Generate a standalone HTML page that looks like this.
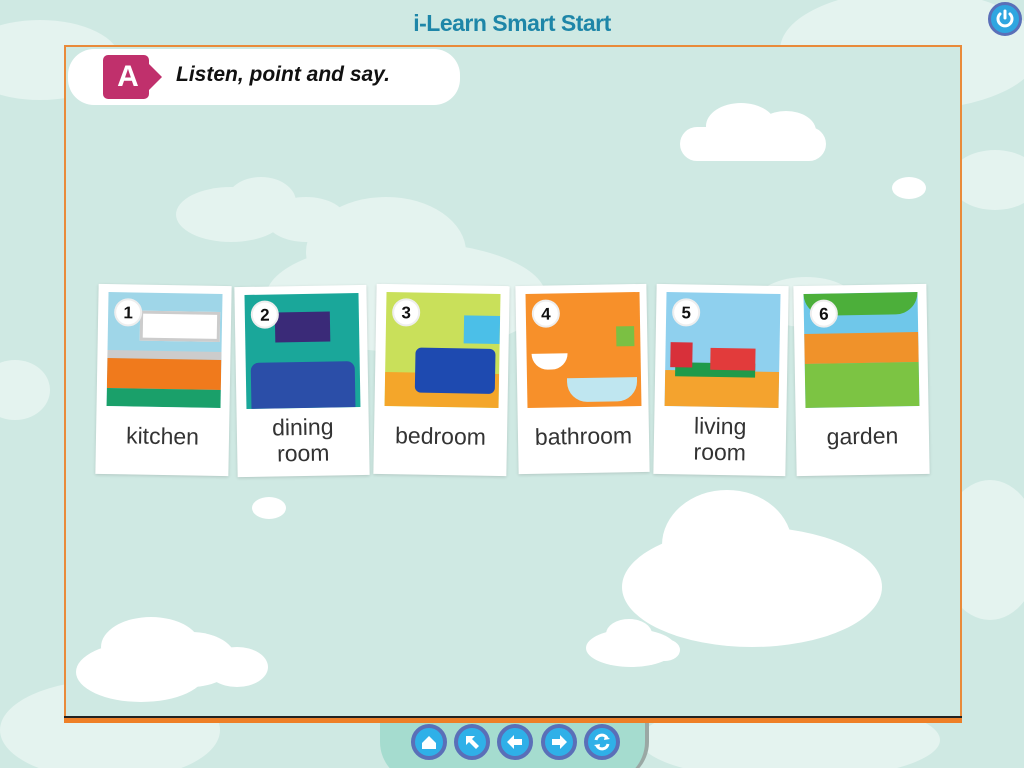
<!DOCTYPE html>
<html><head><meta charset="utf-8"><style>
*{margin:0;padding:0;box-sizing:border-box}
html,body{width:1024px;height:768px;overflow:hidden}
body{background:#cfe9e3;position:relative;font-family:"Liberation Sans",sans-serif}
.c{position:absolute;background:#e4f3ef;border-radius:50%}
.w{position:absolute;background:#fff;border-radius:50%}
#title{position:absolute;left:0;width:1024px;top:10px;text-align:center;color:#1e86a8;font:bold 23px "Liberation Sans Narrow","Liberation Sans",sans-serif;letter-spacing:-0.5px}
#frame{position:absolute;left:64px;top:45px;width:898px;height:678px;border:2px solid #e98a3a;border-bottom:none;overflow:hidden;background:#cfe9e3}
#bl{position:absolute;left:64px;top:716px;width:898px;height:2px;background:#222}
#bo{position:absolute;left:64px;top:718px;width:898px;height:5px;background:#ee7f27}
.card{position:absolute;background:#fff;box-shadow:0 1px 3px rgba(0,0,0,.15)}
.img{position:absolute;left:10px;top:8px;width:114px;height:114px;overflow:hidden}
.num{position:absolute;left:6px;top:6px;width:28px;height:28px;border-radius:50%;background:#fff;border:2px solid #eee;font:bold 17px "Liberation Sans",sans-serif;text-align:center;line-height:25px;color:#111;z-index:2}
.lbl{position:absolute;left:0;width:100%;text-align:center;font-size:23px;color:#333;line-height:26px}
.btn{position:absolute;top:724px;width:36px;height:36px;border-radius:50%;background:#2fb0e8;border:4px solid #5a6fb8}
.hA{position:absolute;left:37px;top:8px;width:50px;text-align:center;color:#fff;font-weight:bold;font-size:30px;line-height:44px;font-family:"Liberation Sans Narrow","Liberation Sans",sans-serif}
.hT{position:absolute;left:110px;top:16px;font-style:italic;font-weight:bold;font-size:21px;color:#111}
</style></head><body>
<div class="c" style="left:-40px;top:20px;width:160px;height:80px"></div>
<div class="c" style="left:780px;top:-10px;width:260px;height:120px"></div>
<div class="c" style="left:950px;top:150px;width:90px;height:60px"></div>
<div class="c" style="left:940px;top:480px;width:100px;height:140px"></div>
<div class="c" style="left:-20px;top:360px;width:70px;height:60px"></div>
<div class="c" style="left:0;top:680px;width:220px;height:100px"></div>
<div class="c" style="left:640px;top:700px;width:300px;height:80px"></div>
<div id="title">i-Learn Smart Start</div>
<div style="position:absolute;left:988px;top:2px;width:34px;height:34px;border-radius:50%;background:#2fa6e0;border:3px solid #5a6fb8">
<svg width="28" height="28" viewBox="0 0 28 28"><path d="M9 9 A7 7 0 1 0 19 9" stroke="#fff" stroke-width="3" fill="none" stroke-linecap="round"/><path d="M14 6 V13" stroke="#fff" stroke-width="3" stroke-linecap="round"/></svg></div>
<div style="position:absolute;left:380px;top:722px;width:265px;height:60px;background:#a5dccf;border-radius:0 0 40px 40px;box-shadow:4px 0 0 #9aa8a4"></div>
<div id="frame">
<div class="c" style="left:110px;top:140px;width:110px;height:55px"></div>
<div class="c" style="left:160px;top:130px;width:70px;height:50px"></div>
<div class="c" style="left:200px;top:150px;width:80px;height:45px"></div>
<div class="c" style="left:200px;top:195px;width:280px;height:110px"></div>
<div class="c" style="left:240px;top:150px;width:160px;height:110px"></div>
<div class="c" style="left:690px;top:230px;width:100px;height:50px"></div>
<div class="w" style="left:614px;top:80px;width:146px;height:34px;border-radius:17px"></div>
<div class="w" style="left:640px;top:56px;width:70px;height:46px"></div>
<div class="w" style="left:690px;top:64px;width:60px;height:40px"></div>
<div class="w" style="left:826px;top:130px;width:34px;height:22px"></div>
<div class="w" style="left:186px;top:450px;width:34px;height:22px"></div>
<div class="w" style="left:596px;top:443px;width:130px;height:110px"></div>
<div class="w" style="left:556px;top:480px;width:260px;height:120px"></div>
<div class="w" style="left:10px;top:595px;width:130px;height:60px"></div>
<div class="w" style="left:35px;top:570px;width:100px;height:60px"></div>
<div class="w" style="left:80px;top:585px;width:90px;height:55px"></div>
<div class="w" style="left:140px;top:600px;width:62px;height:40px"></div>
<div class="w" style="left:520px;top:582px;width:90px;height:38px"></div>
<div class="w" style="left:540px;top:572px;width:46px;height:30px"></div>
<div class="w" style="left:584px;top:592px;width:30px;height:22px"></div>
<div style="position:absolute;left:2px;top:2px;width:392px;height:56px;background:#fff;border-radius:26px"></div>
<div style="position:absolute;left:37px;top:8px;width:46px;height:44px;background:#c0306c;border-radius:5px"></div>
<div style="position:absolute;left:76px;top:10px;width:0;height:0;border-top:20px solid transparent;border-bottom:20px solid transparent;border-left:20px solid #c0306c"></div>
<div class="hA">A</div>
<div class="hT">Listen, point and say.</div>
</div>
<div id="bl"></div><div id="bo"></div>

<div class="card" style="left:97px;top:285px;width:133px;height:190px;transform:rotate(1deg)">
<div class="img" style="background:#9fd6e8"><div class="num">1</div>
<div style="position:absolute;left:32px;top:18px;width:80px;height:30px;background:#fff;border:3px solid #ccc"></div>
<div style="position:absolute;left:0;top:58px;width:114px;height:8px;background:#ccc"></div>
<div style="position:absolute;left:0;top:66px;width:114px;height:30px;background:#f07a1c"></div>
<div style="position:absolute;left:0;top:96px;width:114px;height:18px;background:#1aa06a"></div></div>
<div class="lbl" style="top:138px">kitchen</div></div>

<div class="card" style="left:236px;top:286px;width:132px;height:190px;transform:rotate(-1deg)">
<div class="img" style="background:#1aa79a"><div class="num">2</div>
<div style="position:absolute;left:30px;top:18px;width:55px;height:30px;background:#3a2a78"></div>
<div style="position:absolute;left:5px;top:68px;width:104px;height:46px;background:#2b4ea8;border-radius:8px 8px 0 0"></div></div>
<div class="lbl" style="top:128px">dining<br>room</div></div>

<div class="card" style="left:375px;top:285px;width:133px;height:190px;transform:rotate(1deg)">
<div class="img" style="background:#c9e05a"><div class="num">3</div>
<div style="position:absolute;left:0;top:80px;width:114px;height:34px;background:#f4a62a"></div>
<div style="position:absolute;left:30px;top:55px;width:80px;height:45px;background:#1e4ab0;border-radius:6px"></div>
<div style="position:absolute;left:78px;top:22px;width:36px;height:28px;background:#4bbfe8"></div></div>
<div class="lbl" style="top:138px">bedroom</div></div>

<div class="card" style="left:517px;top:285px;width:131px;height:188px;transform:rotate(-1deg)">
<div class="img" style="background:#f7902a"><div class="num">4</div>
<div style="position:absolute;left:40px;top:85px;width:70px;height:24px;background:#bfe6f0;border-radius:0 0 20px 20px"></div>
<div style="position:absolute;left:5px;top:60px;width:36px;height:16px;background:#fff;border-radius:0 0 18px 18px"></div>
<div style="position:absolute;left:90px;top:34px;width:18px;height:20px;background:#7bc043"></div></div>
<div class="lbl" style="top:138px">bathroom</div></div>

<div class="card" style="left:655px;top:285px;width:132px;height:190px;transform:rotate(1deg)">
<div class="img" style="background:#8fd0ee"><div class="num">5</div>
<div style="position:absolute;left:0;top:78px;width:114px;height:36px;background:#f4a32e"></div>
<div style="position:absolute;left:10px;top:70px;width:80px;height:14px;background:#1f9a4a"></div>
<div style="position:absolute;left:45px;top:55px;width:45px;height:22px;background:#e23b3b"></div>
<div style="position:absolute;left:5px;top:50px;width:22px;height:25px;background:#d8303a"></div></div>
<div class="lbl" style="top:128px">living<br>room</div></div>

<div class="card" style="left:795px;top:285px;width:133px;height:190px;transform:rotate(-1deg)">
<div class="img" style="background:#6fc7ea"><div class="num">6</div>
<div style="position:absolute;left:0;top:0;width:114px;height:22px;background:#4caf3a;border-radius:0 0 30px 30px"></div>
<div style="position:absolute;left:0;top:40px;width:114px;height:30px;background:#f0922a"></div>
<div style="position:absolute;left:0;top:70px;width:114px;height:44px;background:#7cc443"></div></div>
<div class="lbl" style="top:138px">garden</div></div>

<div class="btn" style="left:411px"><svg width="28" height="28" viewBox="0 0 28 28"><path d="M7 15 L14 8 L21 15 V21 H7 Z" fill="#fff"/></svg></div>
<div class="btn" style="left:454px"><svg width="28" height="28" viewBox="0 0 28 28"><path d="M8 8 H17 L14 11 L21 18 L18 21 L11 14 L8 17 Z" fill="#fff"/></svg></div>
<div class="btn" style="left:497px"><svg width="28" height="28" viewBox="0 0 28 28"><path d="M6 14 L13 7 V11 H21 V17 H13 V21 Z" fill="#fff"/></svg></div>
<div class="btn" style="left:541px"><svg width="28" height="28" viewBox="0 0 28 28"><path d="M22 14 L15 7 V11 H7 V17 H15 V21 Z" fill="#fff"/></svg></div>
<div class="btn" style="left:584px"><svg width="28" height="28" viewBox="0 0 28 28"><path d="M8 12 A6 6 0 0 1 19 10 M20 16 A6 6 0 0 1 9 18" stroke="#fff" stroke-width="3" fill="none"/><path d="M17 7 L22 11 L16 12Z M11 21 L6 17 L12 16Z" fill="#fff"/></svg></div>
</body></html>
